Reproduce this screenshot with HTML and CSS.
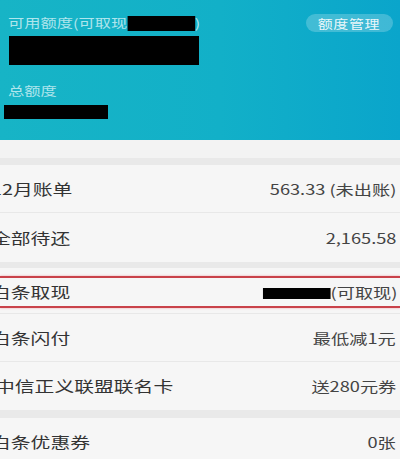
FILE: index.html
```html
<!DOCTYPE html>
<html lang="zh-CN">
<head>
<meta charset="utf-8">
<title>白条</title>
<link rel="stylesheet" href="styles.css">
</head>
<body>
<div class="page">
  <div class="header">
    <div class="hd-top">
      <span class="hd-lbl">可用额度(可取现<span class="redact r1"></span>)</span>
      <span class="manage"><span class="manage-txt">额度管理</span></span>
    </div>
    <div class="redact r2"></div>
    <div class="hd-lbl total">总额度</div>
    <div class="redact r3"></div>
  </div>
  <div class="strip"></div>
  <div class="gap g7"></div>
  <div class="group">
    <div class="row r-a"><span class="lbl">12月账单</span><span class="val">563.33 (未出账)</span></div>
    <div class="row r-b"><span class="lbl">全部待还</span><span class="val">2,165.58</span></div>
  </div>
  <div class="gap g6"></div>
  <div class="group">
    <div class="row r-hl">
      <div class="hl-box"><span class="lbl">白条取现</span><span class="val"><span class="redact r4"></span>(可取现)</span></div>
    </div>
    <div class="row r-c"><span class="lbl">白条闪付</span><span class="val">最低减1元</span></div>
    <div class="row r-c last"><span class="lbl lbl-zx">中信正义联盟联名卡</span><span class="val">送280元券</span></div>
  </div>
  <div class="gap g8"></div>
  <div class="group">
    <div class="row r-c last"><span class="lbl">白条优惠券</span><span class="val">0张</span></div>
  </div>
</div>
</body>
</html>
```

FILE: styles.css
```css
html, body {
  margin: 0;
  padding: 0;
}
body {
  width: 400px;
  height: 459px;
  overflow: hidden;
  background: #f6f6f6;
  font-family: "Noto Sans CJK SC", "Noto Sans", sans-serif;
}
.page {
  width: 400px;
  overflow: hidden;
}
.header {
  height: 140px;
  box-sizing: border-box;
  padding: 14px 7px 0 8px;
  background: linear-gradient(90deg, #17b4c6 0%, #12b0c8 55%, #0aa5cb 100%);
}
.hd-top {
  display: flex;
  justify-content: space-between;
  align-items: center;
  height: 18px;
}
.hd-lbl {
  display: inline-block;
  font-size: 12.5px;
  line-height: 16px;
  color: rgba(235, 250, 252, 0.72);
  transform: scaleX(1.3);
  transform-origin: left center;
  white-space: nowrap;
}
.redact {
  background: #000;
}
.r1 {
  display: inline-block;
  width: 52px;
  height: 15px;
  vertical-align: -3px;
}
.manage {
  width: 87px;
  height: 18px;
  border-radius: 9px;
  background: rgba(255, 255, 255, 0.22);
  display: flex;
  align-items: center;
  justify-content: center;
}
.manage-txt {
  display: inline-block;
  font-size: 12px;
  color: rgba(255, 255, 255, 0.9);
  transform: scaleX(1.25);
  letter-spacing: 0.5px;
}
.r2 {
  margin: 4px 0 0 1px;
  width: 190px;
  height: 29px;
}
.total {
  display: block;
  margin-top: 18px;
}
.r3 {
  margin: 6px 0 0 -4px;
  width: 104px;
  height: 14px;
}
.strip {
  height: 18px;
  background: #f3f3f3;
}
.gap {
  background: #e9e9e9;
}
.g7 { height: 7px; }
.g6 { height: 6px; }
.g8 { height: 8px; }
.group {
  background: #f6f6f6;
}
.row {
  display: flex;
  justify-content: space-between;
  align-items: center;
  padding-right: 4px;
  border-bottom: 1px solid #e8e8e8;
  box-sizing: border-box;
}
.row.last {
  border-bottom: none;
}
.r-a { height: 48px; }
.r-b { height: 49px; border-bottom: none; }
.r-c { height: 48px; }
.lbl {
  display: inline-block;
  margin-left: -9px;
  font-size: 15px;
  line-height: 18px;
  color: #333;
  transform: scaleX(1.32);
  transform-origin: left center;
  white-space: nowrap;
}
.lbl-zx {
  margin-left: -5px;
}
.val {
  display: inline-block;
  font-size: 14px;
  line-height: 18px;
  color: #444;
  transform: scaleX(1.3);
  transform-origin: right center;
  white-space: nowrap;
}
.r-hl {
  height: 46px;
  padding: 0;
  align-items: flex-start;
}
.hl-box {
  flex: 1;
  margin-top: 8px;
  height: 32px;
  box-sizing: border-box;
  border-top: 2px solid #c9424a;
  border-bottom: 2px solid #c9424a;
  box-shadow: 0 0 2px rgba(235, 110, 120, 0.6);
  display: flex;
  justify-content: space-between;
  align-items: center;
  padding-right: 3px;
}
.r4 {
  display: inline-block;
  width: 52px;
  height: 11px;
  vertical-align: -1px;
}
```
